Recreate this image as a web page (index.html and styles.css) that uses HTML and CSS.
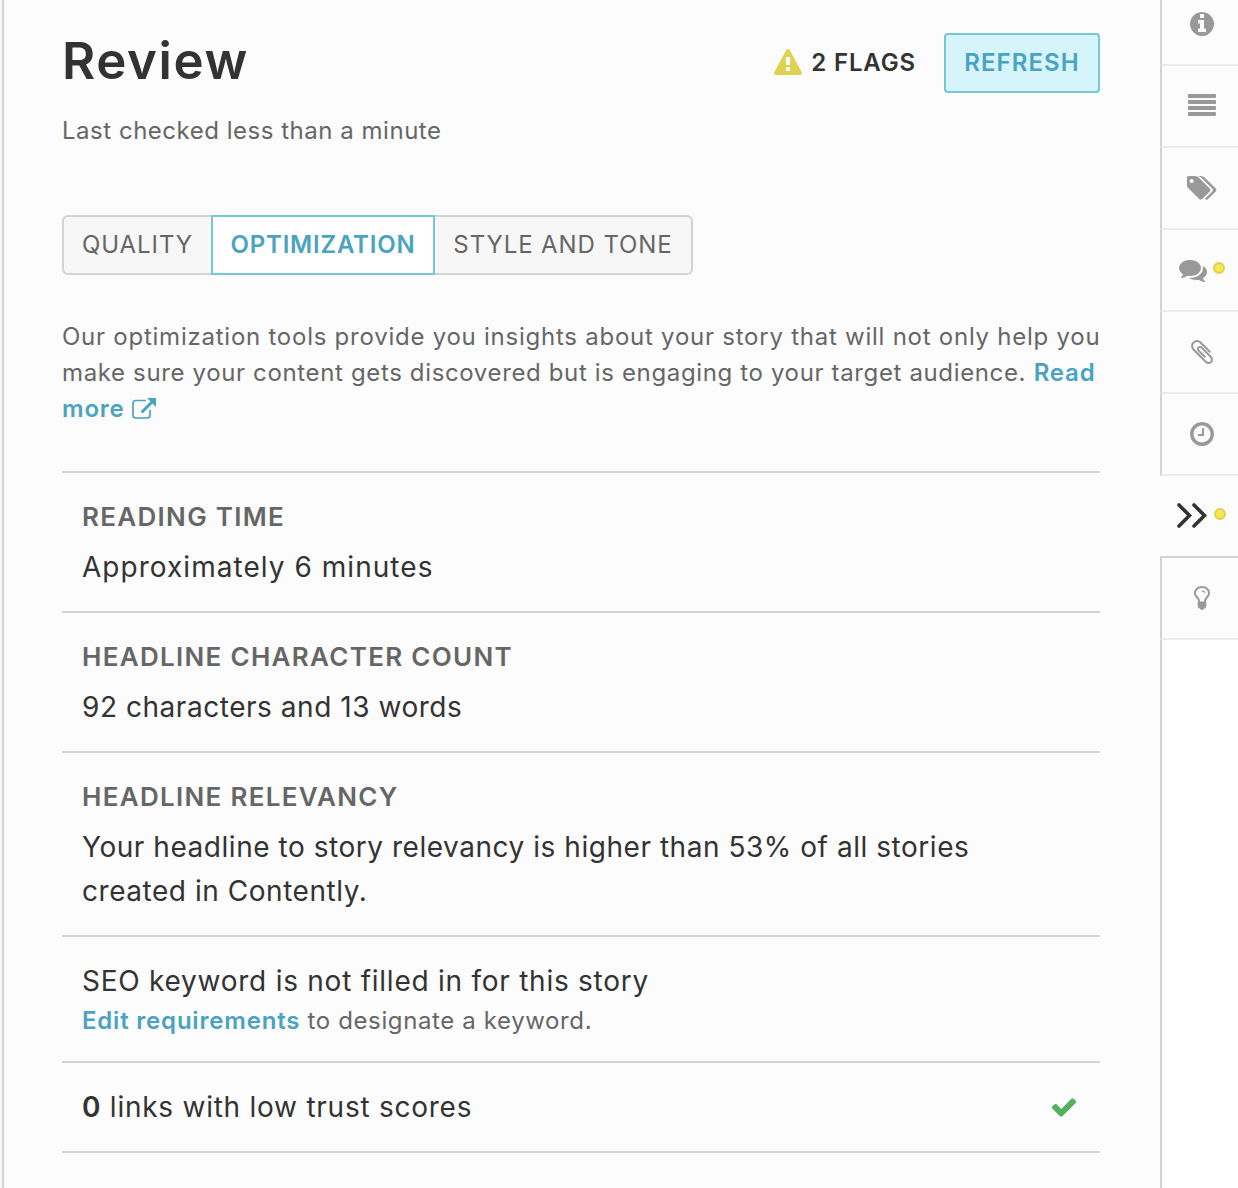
FILE: index.html
```html
<!DOCTYPE html>
<html lang="en">
<head>
    <meta charset="UTF-8">
    <meta name="viewport" content="width=device-width, initial-scale=1.0">
    <title>Review</title>
    <link rel="stylesheet" href="styles.css">
</head>
<body>
    <div class="app">
        <main class="panel">
            <header class="panel-header">
                <h1>Review</h1>
                <div class="flags">
                    <svg class="icon" viewBox="0 0 1792 1792"><path d="M1024 1375v-190q0-14-9.500-23.500t-22.500-9.500h-192q-13 0-22.500 9.500t-9.500 23.500v190q0 14 9.500 23.500t22.500 9.500h192q13 0 22.500-9.500t9.500-23.500zm-2-374l18-459q0-12-10-19-13-11-24-11h-220q-11 0-24 11-10 7-10 21l17 457q0 10 10 16.500t24 6.500h185q14 0 23.500-6.500t10.500-16.500zm-14-934l768 1408q35 63-2 126-17 29-46.500 46t-63.500 17h-1536q-34 0-63.500-17t-46.500-46q-37-63-2-126l768-1408q17-31 47-49t65-18 65 18 47 49z"/></svg>
                    <span>2 FLAGS</span>
                </div>
                <button class="refresh-button">REFRESH</button>
            </header>
            <p class="last-checked">Last checked less than a minute</p>

            <div class="tabs">
                <button class="tab tab-quality">QUALITY</button>
                <button class="tab tab-optimization active">OPTIMIZATION</button>
                <button class="tab tab-style">STYLE AND TONE</button>
            </div>

            <p class="intro">
                Our optimization tools provide you insights about your story that will not only help you<br>
                <span class="snug">make sure your content gets discovered but is engaging to your target audience.</span>
                <a class="link" href="#">Read<br>more <svg class="external" viewBox="0 0 24 22"><path class="box" d="M14 2.500H4Q1 2.500 1 5.500V17Q1 20 4 20H15Q18 20 18 17V12"/><path class="shaft" d="M10.500 13.500L20 4"/><path class="head" d="M15 0H24V9Z"/></svg></a>
            </p>

            <ul class="checks">
                <li>
                    <h2>READING TIME</h2>
                    <p class="roomy">Approximately 6 minutes</p>
                </li>
                <li>
                    <h2>HEADLINE CHARACTER COUNT</h2>
                    <p>92 characters and 13 words</p>
                </li>
                <li>
                    <h2>HEADLINE RELEVANCY</h2>
                    <p>Your headline to story relevancy is higher than 53% of all stories<br>created in Contently.</p>
                </li>
                <li>
                    <p class="seo">SEO keyword is not filled in for this story</p>
                    <p class="hint"><a class="link" href="#">Edit requirements</a> to designate a keyword.</p>
                </li>
                <li class="check-row">
                    <p class="seo"><b>0</b> links with low trust scores</p>
                    <svg class="icon passed" viewBox="0 0 1792 1792"><path d="M1671 566q0 40-28 68l-724 724-136 136q-28 28-68 28t-68-28l-136-136-362-362q-28-28-28-68t28-68l136-136q28-28 68-28t68 28l294 295 656-657q28-28 68-28t68 28l136 136q28 28 28 68z"/></svg>
                </li>
            </ul>
        </main>

        <nav class="rail">
            <a class="rail-item" href="#">
                <svg class="icon" viewBox="0 0 1792 1792"><path d="M1152 1376v-160q0-14-9-23t-23-9h-96v-512q0-14-9-23t-23-9h-320q-14 0-23 9t-9 23v160q0 14 9 23t23 9h96v320h-96q-14 0-23 9t-9 23v160q0 14 9 23t23 9h448q14 0 23-9t9-23zm-128-896v-192q0-14-9-23t-23-9h-192q-14 0-23 9t-9 23v192q0 14 9 23t23 9h192q14 0 23-9t9-23zm640 416q0 209-103 385.500t-279.500 279.500-385.500 103-385.500-103-279.500-279.500-103-385.500 103-385.500 279.500-279.500 385.500-103 385.500 103 279.500 279.500 103 385.500z"/></svg>
            </a>
            <a class="rail-item" href="#">
                <svg class="icon" viewBox="0 0 1792 1792"><path d="M1792 1344v128q0 26-19 45t-45 19h-1664q-26 0-45-19t-19-45v-128q0-26 19-45t45-19h1664q26 0 45 19t19 45zm0-384v128q0 26-19 45t-45 19h-1664q-26 0-45-19t-19-45v-128q0-26 19-45t45-19h1664q26 0 45 19t19 45zm0-384v128q0 26-19 45t-45 19h-1664q-26 0-45-19t-19-45v-128q0-26 19-45t45-19h1664q26 0 45 19t19 45zm0-384v128q0 26-19 45t-45 19h-1664q-26 0-45-19t-19-45v-128q0-26 19-45t45-19h1664q26 0 45 19t19 45z"/></svg>
            </a>
            <a class="rail-item" href="#">
                <svg class="icon wide" viewBox="-42 0 1920 1792"><path d="M384 448q0-53-37.500-90.500t-90.500-37.500-90.500 37.500-37.500 90.500 37.500 90.500 90.500 37.500 90.500-37.500 37.500-90.500zm1067 576q0 53-37 90l-491 492q-39 37-91 37-53 0-90-37l-715-716q-38-37-64.500-101t-26.500-117v-416q0-52 38-90t90-38h416q53 0 117 26.500t102 64.500l715 714q37 39 37 91zm384 0q0 53-37 90l-491 492q-39 37-91 37-36 0-59-14t-53-45l470-470q37-37 37-90 0-52-37-91l-715-714q-38-38-102-64.500t-117-26.500h224q53 0 117 26.500t102 64.500l715 714q37 39 37 91z"/></svg>
            </a>
            <a class="rail-item has-dot" href="#">
                <svg class="icon" viewBox="0 0 1792 1792"><path d="M1408 768q0 139-94 257t-256.500 186.500-353.500 68.500q-86 0-176-16-124 88-278 128-36 9-86 16h-3q-11 0-20.500-8t-11.500-21q-1-3-1-6.500t.5-6.500 2-6l2.500-5 3.500-5.500 4-5 4.500-5 4-4.500q5-6 23-25t26-29.500 22.500-29 25-38.500 20.500-44q-124-72-195-177t-71-224q0-139 94-257t256.500-186.500 353.500-68.500 353.500 68.500 256.500 186.500 94 257zm384 256q0 120-71 224.500t-195 176.500q10 24 20.500 44t25 38.500 22.500 29 26 29.500 23 25q1 1 4 4.500t4.500 5 4 5 3.500 5.500l2.500 5 2 6 .5 6.500-1 6.500q-3 14-13 22t-22 7q-50-7-86-16-154-40-278-128-90 16-176 16-271 0-472-132 58 4 88 4 161 0 309-45t264-129q125-92 192-212t67-254q0-77-23-152 129 71 204 178t75 230z"/></svg>
                <span class="dot"></span>
            </a>
            <a class="rail-item" href="#">
                <svg class="icon" viewBox="0 0 1792 1792"><path d="M1596 1385q0 117-79 196t-196 79q-135 0-235-100l-777-776q-113-115-113-271 0-159 110-270t269-111q158 0 273 113l605 606q10 10 10 22 0 16-30.500 46.500t-46.500 30.500q-13 0-23-10l-606-607q-79-77-181-77-106 0-179 75t-73 181q0 105 76 181l776 777q63 63 145 63 64 0 106-42t42-106q0-82-63-145l-581-581q-26-24-60-24-29 0-48 19t-19 48q0 32 25 59l410 410q10 10 10 22 0 16-31 47t-47 31q-12 0-22-10l-410-410q-63-61-63-149 0-82 57-139t139-57q88 0 149 63l581 581q100 98 100 235z"/></svg>
            </a>
            <a class="rail-item" href="#">
                <svg class="icon" viewBox="0 0 1792 1792"><path d="M1024 544v448q0 14-9 23t-23 9h-320q-14 0-23-9t-9-23v-64q0-14 9-23t23-9h224v-352q0-14 9-23t23-9h64q14 0 23 9t9 23zm416 352q0-148-73-273t-198-198-273-73-273 73-198 198-73 273 73 273 198 198 273 73 273-73 198-198 73-273zm224 0q0 209-103 385.500t-279.500 279.500-385.500 103-385.500-103-279.500-279.500-103-385.500 103-385.500 279.500-279.500 385.500-103 385.500 103 279.500 279.500 103 385.500z"/></svg>
            </a>
            <a class="rail-item has-dot active" href="#">
                <svg class="chevrons" viewBox="0 0 30 25"><path d="M2 2L12.500 12.500L2 23M17 2L27.500 12.500L17 23"/></svg>
                <span class="dot"></span>
            </a>
            <a class="rail-item" href="#">
                <svg class="icon" viewBox="0 0 1792 1792"><path d="M1120 576q0 13-9.500 22.500t-22.500 9.500-22.500-9.500-9.500-22.500q0-46-54-71t-106-25q-13 0-22.500-9.500t-9.500-22.500 9.500-22.500 22.500-9.500q50 0 99.500 16t87 54 37.500 90zm160 0q0-72-34.500-134t-90-101.500-123-62-136.500-22.500-136.500 22.500-123 62-90 101.500-34.500 134q0 101 68 180 10 11 30.500 33t30.500 33q128 153 141 298h228q13-145 141-298 10-11 30.500-33t30.500-33q68-79 68-180zm128 0q0 155-103 268-45 49-74.500 87t-59.500 95.500-34 107.500q47 28 47 82 0 37-25 64 25 27 25 64 0 52-45 81 13 23 13 47 0 46-31.500 71t-77.500 25q-20 44-60 70t-87 26-87-26-60-70q-46 0-77.500-25t-31.500-71q0-24 13-47-45-29-45-81 0-37 25-64-25-27-25-64 0-54 47-82-4-50-34-107.500t-59.500-95.500-74.500-87q-103-113-103-268 0-99 44.500-184.500t117-142 164-89 186.500-32.500 186.500 32.500 164 89 117 142 44.500 184.500z"/></svg>
            </a>
            <div class="rail-rest"></div>
        </nav>
    </div>
</body>
</html>
```
FILE: styles.css
```css
* {
    box-sizing: border-box;
}

body {
    margin: 0;
    font-family: Inter, sans-serif;
    font-size: 24px;
    line-height: 36px;
    color: #666;
    background-color: #f7f7f7;
}

h1, h2, p, ul {
    margin: 0;
    padding: 0;
}

.app {
    display: flex;
    height: 1188px;
    margin-left: 2px;
    border-left: 2px solid #d3d3d3;
    background-color: #fcfcfc;
    overflow: hidden;
}

.panel {
    flex: 1;
    min-width: 0;
    padding: 33px 60px 0 58px;
}

.panel-header {
    display: flex;
    align-items: center;
    height: 60px;
}

h1 {
    flex: 1;
    padding-bottom: 4px;
    font-size: 51px;
    font-weight: 600;
    line-height: 56px;
    letter-spacing: 1.6px;
    color: #333;
}

.icon {
    width: 28px;
    height: 28px;
    fill: currentColor;
}

.icon.wide {
    width: 30px;
    margin-left: -1px;
}

.flags {
    display: flex;
    align-items: center;
    gap: 9px;
    margin-right: 28px;
    font-weight: 600;
    letter-spacing: 0.85px;
    color: #333;
}

.flags .icon {
    color: #dfd250;
}

.refresh-button {
    width: 156px;
    height: 60px;
    padding: 0;
    font: inherit;
    font-weight: 600;
    letter-spacing: 1.1px;
    color: #4aa3c0;
    background-color: #d6f4fb;
    border: 2px solid #74c7d5;
    border-radius: 4px;
}

.last-checked {
    margin-top: 20px;
    letter-spacing: 0.52px;
}

.tabs {
    display: flex;
    margin-top: 66px;
}

.tab {
    height: 60px;
    padding: 0;
    font: inherit;
    letter-spacing: 0.9px;
    color: #666;
    background-color: #f7f7f7;
    border: 2px solid #d3d3d3;
}

.tab-quality {
    width: 149px;
    border-right: none;
    border-radius: 6px 0 0 6px;
}

.tab-optimization {
    width: 224px;
}

.tab-style {
    width: 258px;
    border-left: none;
    border-radius: 0 6px 6px 0;
}

.tab.active {
    font-weight: 600;
    letter-spacing: 0.8px;
    color: #4aa3c0;
    background-color: #fff;
    border-color: #74c7d5;
}

.intro {
    margin-top: 44px;
    letter-spacing: 0.755px;
    white-space: nowrap;
}

.intro .snug {
    letter-spacing: 0.64px;
}

.link {
    font-weight: 600;
    letter-spacing: 0.8px;
    color: #4aa3c0;
    text-decoration: none;
}

.external {
    width: 24px;
    height: 22px;
    margin-left: 1px;
    vertical-align: -3px;
    fill: none;
    stroke: currentColor;
}

.external .box {
    stroke-width: 1.7;
}

.external .shaft {
    stroke-width: 3;
    stroke-linecap: round;
}

.external .head {
    fill: currentColor;
    stroke: none;
}

.checks {
    margin-top: 44px;
    list-style: none;
    border-top: 2px solid #d3d3d3;
}

.checks li {
    padding: 22px 20px;
    border-bottom: 2px solid #d3d3d3;
}

.checks h2 {
    margin-bottom: 6px;
    font-size: 26px;
    font-weight: 600;
    line-height: 44px;
    letter-spacing: 1.3px;
}

.checks p {
    font-size: 28px;
    line-height: 44px;
    letter-spacing: 0.54px;
    color: #333;
    white-space: nowrap;
}

.checks .roomy {
    letter-spacing: 1.04px;
}

.checks .seo {
    letter-spacing: 0.75px;
}

.checks .hint {
    font-size: 24px;
    line-height: 36px;
    letter-spacing: 0.62px;
    color: #666;
}

.checks b {
    font-weight: 600;
}

.check-row {
    display: flex;
    align-items: center;
    justify-content: space-between;
}

.passed {
    margin-right: 2px;
    color: #55b05c;
}

/* right icon rail */
.rail {
    display: flex;
    flex-direction: column;
    width: 78px;
    margin-top: -16px;
}

.rail-item {
    position: relative;
    display: flex;
    align-items: center;
    height: 82px;
    padding-left: 26px;
    color: #999;
    border-left: 2px solid #d3d3d3;
    border-bottom: 2px solid #ececec;
}

.rail-item.has-dot {
    padding-left: 17px;
}

.rail-item.active {
    color: #333;
    border-left: none;
    border-bottom-color: #d3d3d3;
}

.rail-rest {
    flex: 1;
    background-color: #fff;
    border-left: 2px solid #d3d3d3;
}

.chevrons {
    width: 30px;
    height: 25px;
    margin-bottom: 2px;
    fill: none;
    stroke: currentColor;
    stroke-width: 3.6;
    stroke-linecap: round;
}

/* unread marker */
.dot {
    position: absolute;
    top: 32px;
    right: 13px;
    width: 12px;
    height: 12px;
    background-color: #f5e74e;
    border: 2px solid #dfd250;
    border-radius: 50%;
}

.active .dot {
    right: 12px;
}
```
